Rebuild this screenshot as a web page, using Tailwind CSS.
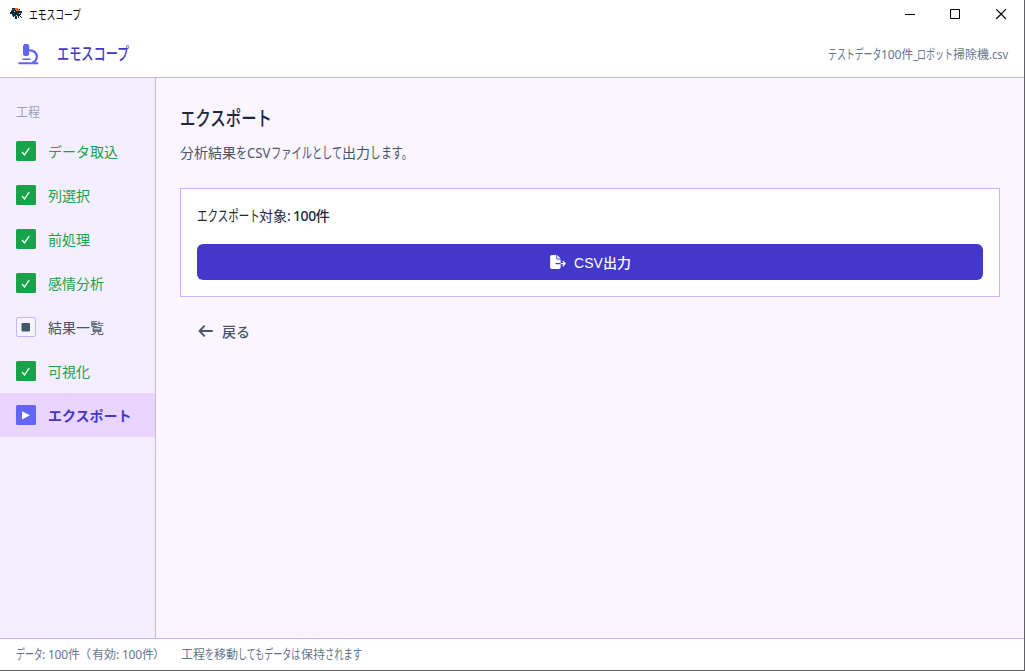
<!DOCTYPE html>
<html lang="ja">
<head>
    <meta charset="UTF-8">
    <meta name="viewport" content="width=device-width, initial-scale=1.0">
    <title>エモスコープ</title>
    <script src="https://cdn.jsdelivr.net/npm/@tailwindcss/browser@4"></script>
</head>
<body class="w-[1025px] h-[671px] overflow-hidden bg-[#5f5f63] pr-px pb-px font-['Noto_Sans','Noto_Sans_CJK_JP',sans-serif]">
    <div class="flex flex-col h-[670px] bg-white">
        <!-- Title bar -->
        <div class="flex items-center h-[29px] shrink-0 text-xs text-black">
            <svg class="w-[13px] h-[13px] ml-[10px] mb-0.5" viewBox="0 0 13 13" shape-rendering="crispEdges">
                <path fill="#14283c" d="M2 1h3v1h5v2h2v2h-1v2h-1v1h1v1h1v1h-1v-1h-1V9H9v2H8V9H7v3H5v-2H3V8H2V7H0V5h1V3h1z"/>
                <path fill="#f26a1b" d="M5 1h3v1h1v2H6V3H5z"/>
                <path fill="#3c8fd0" d="M1 3h1v1H1zM9 3h1v1H9zM3 2h1v1H3zM2 8h1v1H2z"/>
                <path fill="#b9d3e8" d="M4 4h1v1H4zM6 8h1v1H6zM9 6h1v1H9zM4 9h1v1H4z"/>
            </svg>
            <span class="block w-[52px] ml-1.5 whitespace-nowrap"><span class="inline-block origin-left scale-x-[.73] scale-y-[1.06]">エモスコープ</span></span>
            <div class="flex items-center ml-auto pr-[17px] gap-[35px]">
                <svg class="w-[11px] h-[11px] -mr-px" viewBox="0 0 11 11" stroke="#000"><path d="M0 5.5h10"/></svg>
                <svg class="w-[11px] h-[11px]" viewBox="0 0 11 11" fill="none" stroke="#000"><path d="M.5.5h9v9h-9z"/></svg>
                <svg class="w-[11px] h-[11px]" viewBox="0 0 11 11" stroke="#000" stroke-width="1.2"><path d="M.2.2l9.800 9.800M10 .2L.2 10"/></svg>
            </div>
        </div>

        <!-- Header -->
        <header class="flex items-center h-[49px] shrink-0 border-b border-[#c4b5fd] pt-0.5 pl-[18px] pr-4">
            <svg class="w-[21px] h-[21px]" viewBox="0 0 21 21" fill="none" stroke="#6366f1" stroke-width="2" stroke-linecap="round">
                <path fill="#6366f1" stroke="none" d="M5 1.500L6.500 0h3.200l1.500 1.500V10.500l-1.500 1.500H6.500L5 10.500z"/>
                <path stroke-width="2.300" d="M12 6.300c4 0 6.800 2.900 6.800 6.300 0 2.800-1.500 5-3.800 6"/>
                <path d="M5 15.200h7" stroke-width="1.400"/>
                <path d="M1.200 19.200h18.300"/>
            </svg>
            <h1 class="w-[76px] ml-[18px] whitespace-nowrap text-base font-medium text-[#4338ca]"><span class="inline-block origin-left scale-x-[.76] scale-y-[1.04]">エモスコープ</span></h1>
            <div class="flex ml-auto mt-px -mr-px text-xs text-[#64748b] whitespace-nowrap">
                <span class="w-[53px]"><span class="inline-block origin-left scale-x-[.74] scale-y-[1.1]">テストデータ</span></span>
                <span class="w-9 tracking-[-0.15px]">100件_</span>
                <span class="w-9"><span class="inline-block origin-left scale-x-[.75] scale-y-[1.1]">ロボット</span></span>
                <span class="w-9">掃除機</span>
                <span class="w-5"><span class="inline-block origin-left scale-x-[.92]">.csv</span></span>
            </div>
        </header>

        <div class="flex flex-1 min-h-0">
            <!-- Sidebar -->
            <nav class="w-[156px] shrink-0 bg-[#f3efff] border-r border-[#c4b5fd] pt-6 text-sm text-[#16a34a]">
                <div class="h-[27px] px-4 text-xs leading-[21px] text-[#94a3b8]">工程</div>
                <div class="flex items-center h-11 px-4 gap-3">
                    <svg class="w-5 h-5" viewBox="0 0 20 20" fill="none"><rect width="20" height="20" rx="1.500" fill="#16a34a"/><path d="M6 11l2.500 2.900 4.700-6.800" stroke="#fff" stroke-width="1.200"/></svg>
                    <span class="pt-px">データ取込</span>
                </div>
                <div class="flex items-center h-11 px-4 gap-3">
                    <svg class="w-5 h-5" viewBox="0 0 20 20" fill="none"><rect width="20" height="20" rx="1.500" fill="#16a34a"/><path d="M6 11l2.500 2.900 4.700-6.800" stroke="#fff" stroke-width="1.200"/></svg>
                    <span class="pt-px">列選択</span>
                </div>
                <div class="flex items-center h-11 px-4 gap-3">
                    <svg class="w-5 h-5" viewBox="0 0 20 20" fill="none"><rect width="20" height="20" rx="1.500" fill="#16a34a"/><path d="M6 11l2.500 2.900 4.700-6.800" stroke="#fff" stroke-width="1.200"/></svg>
                    <span class="pt-px">前処理</span>
                </div>
                <div class="flex items-center h-11 px-4 gap-3">
                    <svg class="w-5 h-5" viewBox="0 0 20 20" fill="none"><rect width="20" height="20" rx="1.500" fill="#16a34a"/><path d="M6 11l2.500 2.900 4.700-6.800" stroke="#fff" stroke-width="1.200"/></svg>
                    <span class="pt-px">感情分析</span>
                </div>
                <div class="flex items-center h-11 px-4 gap-3 text-[#475569]">
                    <svg class="w-5 h-5" viewBox="0 0 20 20"><rect x=".5" y=".5" width="19" height="19" rx="1.500" fill="#f5f3ff" stroke="#c4b5fd"/><rect x="5.500" y="6" width="8.500" height="8.500" rx="1" fill="#475569"/></svg>
                    <span class="pt-px">結果一覧</span>
                </div>
                <div class="flex items-center h-11 px-4 gap-3">
                    <svg class="w-5 h-5" viewBox="0 0 20 20" fill="none"><rect width="20" height="20" rx="1.500" fill="#16a34a"/><path d="M6 11l2.500 2.900 4.700-6.800" stroke="#fff" stroke-width="1.200"/></svg>
                    <span class="pt-px">可視化</span>
                </div>
                <div class="flex items-center h-11 px-4 gap-3 bg-[#e9d5ff] font-bold text-[#4338ca]">
                    <svg class="w-5 h-5" viewBox="0 0 20 20"><rect width="20" height="20" rx="1.500" fill="#6366f1"/><path d="M6 6.200v8.200l8-4.100z" fill="#fff"/></svg>
                    <span class="pt-px">エクスポート</span>
                </div>
            </nav>

            <!-- Main -->
            <main class="flex-1 bg-[#faf5ff] px-6 pt-[25px]">
                <h2 class="h-8 whitespace-nowrap text-xl leading-8 font-medium text-[#1e293b]"><span class="inline-block origin-left scale-x-[.77]">エクスポート</span></h2>
                <p class="flex h-5 mt-2 whitespace-nowrap text-sm leading-5 text-[#475569]">
                    <span class="w-14">分析結果</span>
                    <span class="w-[11px]"><span class="inline-block origin-left scale-x-[.78] scale-y-[1.08]">を</span></span>
                    <span class="w-[24px]"><span class="inline-block origin-left scale-x-[.94]">CSV</span></span>
                    <span class="w-[71px]"><span class="inline-block origin-left scale-x-[.73] scale-y-[1.08]">ファイルとして</span></span>
                    <span class="w-7">出力</span>
                    <span><span class="inline-block origin-left scale-x-[.78] scale-y-[1.08]">します。</span></span>
                </p>
                <div class="mt-[25px] h-[109px] bg-white border border-[#c4b5fd] px-4 pt-[15px]">
                    <p class="flex h-[23px] whitespace-nowrap text-sm leading-[23px] text-[#1e293b]">
                        <span class="w-[62px]"><span class="inline-block origin-left scale-x-[.75] scale-y-[1.08]">エクスポート</span></span>
                        <span class="w-[34px]">対象:</span>
                        <span class="font-medium tracking-[-0.4px]">100件</span>
                    </p>
                    <button class="flex items-center justify-center gap-2 w-full h-9 mt-[17px] rounded-md bg-[#4338ca] pl-px text-sm font-medium text-white font-['Liberation_Sans','Noto_Sans_CJK_JP',sans-serif]">
                        <svg class="w-4 h-[14px]" fill="currentColor" viewBox="0 0 576 512">
                            <path d="M0 64C0 28.700 28.700 0 64 0L224 0l0 128c0 17.700 14.300 32 32 32l128 0 0 128-168 0c-13.300 0-24 10.700-24 24s10.700 24 24 24l168 0 0 112c0 35.300-28.700 64-64 64L64 512c-35.300 0-64-28.700-64-64L0 64zM384 336l0-48 110.100 0-39-39c-9.400-9.400-9.400-24.600 0-33.900s24.600-9.400 33.900 0l80 80c9.400 9.400 9.400 24.600 0 33.900l-80 80c-9.400 9.400-24.600 9.400-33.900 0s-9.400-24.600 0-33.900l39-39L384 336zm0-208l-128 0L256 0 384 128z"/>
                        </svg>
                        <span class="pt-0.5">CSV出力</span>
                    </button>
                </div>
                <button class="flex items-center gap-[9px] h-9 mt-4 px-[18px] text-sm font-medium text-[#475569]">
                    <svg class="w-[15px] h-[14px]" viewBox="0 0 15 14" fill="none" stroke="currentColor" stroke-width="1.900" stroke-linecap="round" stroke-linejoin="round"><path d="M14 7H1.500M6.200 2.200L1.500 7l4.700 4.800"/></svg>
                    <span class="pt-px">戻る</span>
                </button>
            </main>
        </div>

        <!-- Status bar -->
        <footer class="flex items-center h-8 shrink-0 border-t border-[#c4b5fd] pt-px pl-4 whitespace-nowrap text-xs text-[#64748b]">
            <span class="w-[26px]"><span class="inline-block origin-left scale-x-[.74] scale-y-[1.1]">データ</span></span>
            <span class="w-[37px] tracking-[-0.2px]">: 100件</span>
            <span class="w-[13px]">（</span>
            <span class="w-6">有効</span>
            <span class="w-[37px] tracking-[-0.2px]">: 100件</span>
            <span class="w-7">）</span>
            <span class="w-6">工程</span>
            <span class="w-[9px]"><span class="inline-block origin-left scale-x-[.75] scale-y-[1.1]">を</span></span>
            <span class="w-6">移動</span>
            <span class="w-[63px]"><span class="inline-block origin-left scale-x-[.75] scale-y-[1.1]">してもデータは</span></span>
            <span class="w-6">保持</span>
            <span><span class="inline-block origin-left scale-x-[.77] scale-y-[1.1]">されます</span></span>
        </footer>
    </div>
</body>
</html>
